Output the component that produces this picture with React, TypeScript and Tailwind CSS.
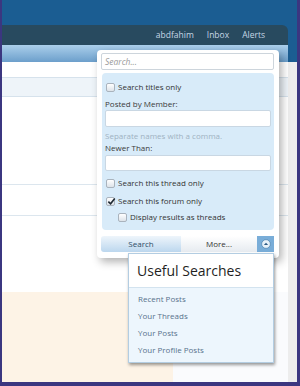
import React from 'react';

const Check = ({ checked }: { checked?: boolean }) => (
  <span className="relative inline-block w-[9px] h-[9px] rounded-[2px] border border-[#a9b3bd] bg-gradient-to-b from-[#ffffff] to-[#dde3e9]">
    {checked && (
      <svg viewBox="0 0 10 10" className="absolute left-[0px] top-[-1px] w-[9px] h-[9px]">
        <path d="M1.5 5.2 L4 7.6 L8.6 1.8" fill="none" stroke="#1f2a33" strokeWidth="1.8" />
      </svg>
    )}
  </span>
);

const CheckRow = ({ label, checked, indent }: { label: string; checked?: boolean; indent?: boolean }) => (
  <div className={`flex items-center gap-[3px] h-[12px] leading-[12px] ${indent ? 'pl-[16px]' : 'pl-[4px]'}`}>
    <Check checked={checked} />
    <span className="text-[#333] whitespace-nowrap">{label}</span>
  </div>
);

export default function App() {
  return (
    <div className="relative w-[300px] h-[386px] overflow-hidden border-l-2 border-r-[3px] border-b-[4px] border-[#3b3680] bg-[#ededed] font-['Open_Sans',sans-serif] text-[8px]">
      {/* header */}
      <div className="h-[62px] bg-[#1b5d92] pt-[25px]">
        <div className="w-[286px] h-[20px] bg-[#284a5f] rounded-tr-[6px] flex items-center justify-end gap-[13px] pr-[23px] text-[8.5px] text-[#c6d7e6]">
          <span>abdfahim</span>
          <span>Inbox</span>
          <span>Alerts</span>
        </div>
        <div className="w-[286px] h-[17px] bg-gradient-to-b from-[#abcfeb] to-[#6c9fcb]" />
      </div>

      {/* page body */}
      <div className="w-[286px] h-[320px] bg-white flex flex-col">
        <div className="h-[15px]" />
        <div className="h-[20px] border-y border-[#d6e2ec] bg-[#eef4f9]" />
        <div className="h-[87px]" />
        <div className="h-[32px] border-y border-[#dce6ee]" />
        <div className="h-[76px]" />
        <div className="flex-1 flex">
          <div className="w-[171px] bg-[#fdf3e6]" />
          <div className="flex-1 bg-[#fafbfd]" />
        </div>
      </div>

      {/* search popup */}
      <div className="absolute left-[95px] top-[50px] w-[182px] h-[208px] rounded-[4px] bg-white shadow-[3px_4px_8px_rgba(0,0,0,0.3)] pt-[3px] px-[4px]">
        <div className="h-[17px] w-[173px] rounded-[2px] border border-[#cdd5dc] bg-white px-[3px] leading-[15px] italic text-[8.5px] text-[#9a9a9a]">
          Search...
        </div>
        <div className="mt-[3px] ml-[1px] w-[172px] h-[157px] rounded-[4px] bg-[#d8ebf9] pt-[8px]">
          <CheckRow label="Search titles only" />
          <div className="mt-[5px] pl-[3px] h-[12px] leading-[12px] text-[#3a3a3a]">Posted by Member:</div>
          <div className="ml-[3px] w-[166px] h-[17px] rounded-[2px] border border-[#c9d7e3] bg-white" />
          <div className="mt-[3px] pl-[3px] h-[12px] leading-[12px] text-[#9fb2c2]">Separate names with a comma.</div>
          <div className="pl-[3px] h-[12px] leading-[12px] text-[#3a3a3a]">Newer Than:</div>
          <div className="mt-[1px] ml-[3px] w-[166px] h-[16px] rounded-[2px] border border-[#c9d7e3] bg-white" />
          <div className="mt-[6px]">
            <CheckRow label="Search this thread only" />
          </div>
          <div className="mt-[6px]">
            <CheckRow label="Search this forum only" checked />
          </div>
          <div className="mt-[4px]">
            <CheckRow label="Display results as threads" indent />
          </div>
        </div>
        <div className="mt-[6px] flex h-[16px] w-[173px]">
          <div className="w-[80px] rounded-l-[3px] bg-gradient-to-b from-[#eef5fb] to-[#bcd7ee] text-center leading-[16px] text-[#2f4d66]">
            Search
          </div>
          <div className="w-[76px] bg-gradient-to-b from-[#ffffff] to-[#e6ebf0] text-center leading-[16px] text-[#333]">
            More...
          </div>
          <div className="w-[17px] bg-[#79add8] flex items-center justify-center">
            <svg viewBox="0 0 12 12" className="w-[10px] h-[10px]">
              <circle cx="6" cy="6" r="5.2" fill="#e8f1f9" stroke="#4f82ad" strokeWidth="0.8" />
              <path d="M3.4 7.3 L6 4.4 L8.6 7.3 Z" fill="#2d5c86" />
            </svg>
          </div>
        </div>
      </div>

      {/* useful searches menu */}
      <div className="absolute left-[126px] top-[253px] w-[146px] h-[110px] border border-[#b3cde2] bg-[#edf6fd] shadow-[1px_2px_3px_rgba(0,0,0,0.4)]">
        <div className="h-[34px] bg-white border-b border-[#d3e3ef] pl-[8px] leading-[34px] text-[14px] text-[#1f1f1f]">
          Useful Searches
        </div>
        <div className="pt-[2px] pl-[9px] flex flex-col text-[#58728c]">
          <span className="h-[17px] leading-[17px]">Recent Posts</span>
          <span className="h-[17px] leading-[17px]">Your Threads</span>
          <span className="h-[17px] leading-[17px]">Your Posts</span>
          <span className="h-[17px] leading-[17px]">Your Profile Posts</span>
        </div>
      </div>
    </div>
  );
}
